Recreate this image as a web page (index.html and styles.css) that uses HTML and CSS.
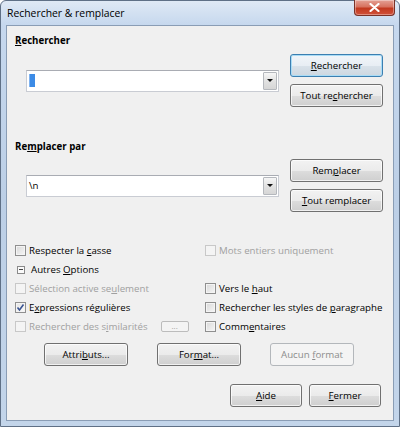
FILE: index.html
```html
<!DOCTYPE html>
<html lang="fr">
<head>
    <meta charset="UTF-8">
    <title>Rechercher &amp; remplacer</title>
    <link rel="stylesheet" href="styles.css">
</head>
<body>
    <div class="window">
        <div class="titlebar">
            <span class="title">Rechercher &amp; remplacer</span>
            <span class="close">
                <svg width="11" height="9" viewBox="0 0 11 9"><path d="M1.5 1 L9.5 8 M9.5 1 L1.5 8" stroke="#ffffff" stroke-width="2.2" stroke-linecap="round"/></svg>
            </span>
        </div>
        <div class="client">
            <div class="label first"><u>R</u>echercher</div>
            <div class="field-row">
                <div class="combo">
                    <span class="sel"></span>
                    <span class="drop"><i></i></span>
                </div>
                <div class="btn-col">
                    <span class="btn default"><span><u>R</u>echercher</span></span>
                    <span class="btn"><span>Tout re<u>c</u>hercher</span></span>
                </div>
            </div>

            <div class="label second">Re<u>m</u>placer par</div>
            <div class="field-row second">
                <div class="combo">
                    <span class="value">\n</span>
                    <span class="drop"><i></i></span>
                </div>
                <div class="btn-col">
                    <span class="btn"><span>Rem<u>p</u>lacer</span></span>
                    <span class="btn"><span><u>T</u>out remplacer</span></span>
                </div>
            </div>

            <div class="options">
                <div class="opt"><span class="box"></span><span>Respecter la <u>c</u>asse</span></div>
                <div class="opt off"><span class="box"></span><span>Mots entiers uniquement</span></div>

                <div class="opt"><span class="expander"></span><span>Autres <u>O</u>ptions</span></div>
                <div></div>

                <div class="opt off"><span class="box"></span><span>Sélection active se<u>u</u>lement</span></div>
                <div class="opt"><span class="box"></span><span>Vers le <u>h</u>aut</span></div>

                <div class="opt"><span class="box checked"><svg width="9" height="9" viewBox="0 0 9 9"><path d="M1.5 4.5 L3.5 7 L7.5 1.5" fill="none" stroke="#3a5493" stroke-width="1.6"/></svg></span><span>E<u>x</u>pressions régulières</span></div>
                <div class="opt"><span class="box"></span><span>Rechercher les styles de <u>p</u>aragraphe</span></div>

                <div class="opt off"><span class="box"></span><span>Rechercher des s<u>i</u>milarités</span><span class="dots">...</span></div>
                <div class="opt"><span class="box"></span><span>Comm<u>e</u>ntaires</span></div>
            </div>

            <div class="btn-row">
                <span class="btn wide"><span>Attri<u>b</u>uts...</span></span>
                <span class="btn wide"><span>For<u>m</u>at...</span></span>
                <span class="btn wide disabled"><span>Aucun <u>f</u>ormat</span></span>
            </div>

            <div class="btn-row end">
                <span class="btn small"><span><u>A</u>ide</span></span>
                <span class="btn small"><span><u>F</u>ermer</span></span>
            </div>
        </div>
    </div>
</body>
</html>
```

FILE: styles.css
```css
body {
    margin: 0;
    background: #ffffff;
    font-family: "Open Sans", "Noto Sans", sans-serif;
    font-size: 9.7px;
    color: #000000;
}
u {
    text-decoration-thickness: 1px;
    text-underline-offset: 1px;
}
.window {
    width: 400px;
    height: 427px;
    box-sizing: border-box;
    border: 1px solid #5f7086;
    border-radius: 6px 6px 0 0;
    background: linear-gradient(180deg, #dfe9f5 0, #c6d8ee 24px, #bccfe6 200px, #c3d5ea 100%);
    padding: 0 5px 5px 5px;
    display: flex;
    flex-direction: column;
}
.titlebar {
    height: 24px;
    display: flex;
    justify-content: space-between;
    align-items: flex-start;
}
.title {
    padding-left: 1px;
    line-height: 24px;
    font-size: 10.4px;
}
.close {
    width: 41px;
    height: 16px;
    margin-top: -1px;
    margin-right: -1px;
    box-sizing: border-box;
    border: 1px solid #7a3127;
    border-top: none;
    border-radius: 0 0 4px 4px;
    background: linear-gradient(180deg, #e4a195 0, #d7725f 45%, #c2391f 55%, #d0513a 100%);
    box-shadow: inset 0 0 0 1px rgba(255, 255, 255, 0.35);
    display: flex;
    align-items: center;
    justify-content: center;
}
.client {
    flex: 1;
    border: 1px solid #8a9db5;
    background: #f0f0f0;
    display: flex;
    flex-direction: column;
}
.label {
    font-weight: bold;
    line-height: 16px;
    padding-left: 8px;
}
.label.first {
    margin-top: 7px;
}
.label.second {
    margin-top: 32px;
}
.field-row {
    display: flex;
    align-items: center;
    margin-top: 5px;
    padding-left: 19px;
    gap: 11px;
}
.field-row.second {
    margin-top: 4px;
}
.combo {
    width: 253px;
    height: 22px;
    box-sizing: border-box;
    border: 1px solid #c9ccd3;
    border-top-color: #a9acb3;
    background: #ffffff;
    display: flex;
    align-items: center;
    padding: 0 1px 0 2px;
}
.sel {
    width: 5px;
    height: 13px;
    background: #3c8be6;
    border-left: 1px solid #7fb3f0;
}
.drop {
    margin-left: auto;
    width: 14px;
    height: 18px;
    box-sizing: border-box;
    border: 1px solid #b5b8bd;
    border-radius: 1px;
    background: linear-gradient(180deg, #f6f6f6, #e2e2e2 50%, #d6d6d6);
    display: flex;
    align-items: center;
    justify-content: center;
}
.drop i {
    width: 0;
    height: 0;
    border-left: 3px solid transparent;
    border-right: 3px solid transparent;
    border-top: 3px solid #111111;
}
.btn-col {
    display: flex;
    flex-direction: column;
    gap: 7px;
}
.btn {
    width: 93px;
    height: 23px;
    box-sizing: border-box;
    border: 1px solid #707070;
    border-radius: 3px;
    background: linear-gradient(180deg, #f2f2f2 0, #ebebeb 50%, #dddddd 51%, #cfcfcf 100%);
    box-shadow: inset 0 0 0 1px rgba(255, 255, 255, 0.7);
    display: flex;
    align-items: center;
    justify-content: center;
    white-space: nowrap;
}
.btn.default {
    border-color: #3c7fb1;
    background: linear-gradient(180deg, #f1f5f9 0, #e8eef4 50%, #d9e2ea 51%, #cdd7e0 100%);
    box-shadow: inset 0 0 0 1px #a9dcf6;
}
.btn.disabled {
    border-color: #b3b7bb;
    background: #f4f4f4;
    box-shadow: none;
    color: #8c8c8c;
}
.options {
    margin-top: 29px;
    padding-left: 8px;
    display: grid;
    grid-template-columns: 190px 1fr;
    grid-auto-rows: 19px;
}
.opt {
    display: flex;
    align-items: center;
    white-space: nowrap;
}
.opt.off {
    color: #a0a0a0;
}
.box {
    width: 11px;
    height: 11px;
    box-sizing: border-box;
    border: 1px solid #8f8f8f;
    background: linear-gradient(135deg, #d8d8d8, #f6f6f6);
    box-shadow: inset 0 0 0 1px #f4f4f4;
    margin-right: 3px;
    display: flex;
    align-items: center;
    justify-content: center;
}
.box.checked {
    background: linear-gradient(135deg, #e4e4e4, #fafafa);
}
.opt.off .box {
    border-color: #c8c8c8;
    background: #f4f4f4;
    box-shadow: none;
}
.expander {
    width: 8px;
    height: 8px;
    box-sizing: border-box;
    border: 1px solid #8a8a8a;
    margin: 0 6px 0 2px;
    position: relative;
    background: #fafafa;
}
.expander::after {
    content: "";
    position: absolute;
    left: 1px;
    right: 1px;
    top: 2px;
    height: 1px;
    background: #444444;
}
.dots {
    margin-left: 13px;
    width: 28px;
    height: 11px;
    box-sizing: border-box;
    border: 1px solid #bcbcbc;
    border-radius: 2px;
    background: #f4f4f4;
    font-size: 8px;
    line-height: 7px;
    text-align: center;
    color: #a0a0a0;
}
.btn-row {
    display: flex;
    gap: 29px;
    margin-top: 7px;
    padding-left: 37px;
}
.btn.wide {
    width: 84px;
}
.btn-row.end {
    margin-top: 18px;
    padding-left: 0;
    padding-right: 12px;
    gap: 7px;
    justify-content: flex-end;
}
.btn.small {
    width: 72px;
}
```
